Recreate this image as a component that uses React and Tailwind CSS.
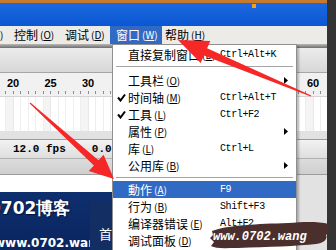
import React from "react";

const menuItems = [
  { label: "直接复制窗口", k: "D", sc: "Ctrl+Alt+K" },
  { sep: true, first: true },
  { label: "工具栏", k: "O", sub: true },
  { label: "时间轴", k: "M", sc: "Ctrl+Alt+T", check: true },
  { label: "工具", k: "L", sc: "Ctrl+F2", check: true },
  { label: "属性", k: "P", sub: true },
  { label: "库", k: "L", sc: "Ctrl+L" },
  { label: "公用库", k: "B", sub: true },
  { sep: true },
  { label: "動作", k: "A", sc: "F9", hl: true },
  { label: "行为", k: "B", sc: "Shift+F3" },
  { label: "编译器错误", k: "E", sc: "Alt+F2" },
  { label: "调试面板", k: "D", sc: "" },
];

function Mn({ k }) {
  return (
    <span className="text-[10px] ml-[2px]">
      (<span className="underline">{k}</span>)
    </span>
  );
}

function Check() {
  return (
    <svg width="9" height="9" viewBox="0 0 9 9" className="shrink-0">
      <path d="M1 4.5 L3.5 7.5 L8 1.5" fill="none" stroke="currentColor" strokeWidth="2" />
    </svg>
  );
}

function SubArrow() {
  return (
    <svg width="4" height="7" viewBox="0 0 4 7">
      <path d="M0 0 L4 3.5 L0 7 Z" fill="#000" />
    </svg>
  );
}

const groups = [20, 25, 30, 35, 40, 45, 50, 55, 60];

export default function App() {
  const cells = Array.from({ length: 46 });
  return (
    <div className="relative w-[336px] h-[250px] overflow-hidden flex bg-[#d6d6d6] font-['Noto_Sans_CJK_SC',sans-serif] text-black">
      <div className="w-[327px] flex flex-col">
        {/* title */}
        <div className="h-[3px] bg-[#c57a30]" />
        <div className="h-[23px] bg-gradient-to-b from-[#1b68e0] to-[#0b57d2] relative">
          <div className="absolute left-[252px] top-[1px] w-[4px] h-[4px] bg-[#f4a020]" />
        </div>
        {/* menu bar */}
        <div className="h-[18px] bg-[#ecebe8] flex items-center text-[12px] leading-none">
          <div className="w-[14px] text-[10px]">)</div>
          <div className="w-[51px] flex items-center">控制<Mn k="O" /></div>
          <div className="w-[45px] flex items-center">调试<Mn k="D" /></div>
          <div className="w-[52px] h-full bg-[#316ac5] text-white flex items-center pl-[6px]">窗口<Mn k="W" /></div>
          <div className="pl-[3px] flex items-center">帮助<Mn k="H" /></div>
        </div>
        <div className="h-[4px] bg-gradient-to-b from-[#b8b8b8] to-[#6e6e6e]" />
        {/* panel */}
        <div className="h-[25px] bg-gradient-to-b from-[#ececec] to-[#d7d7d7] border-b border-[#a6a6a6]" />
        {/* ruler */}
        <div className="h-[23px] bg-[#f1f1f1] flex overflow-hidden">
          <div className="flex ml-[-5.75px]">
            {groups.map((g) => (
              <div key={g} className="w-[37.5px] shrink-0 flex flex-col">
                <div className="h-[17px] flex items-end justify-center pb-[1px] text-[11px] font-bold font-['Liberation_Sans',sans-serif] leading-none">{g}</div>
                <div className="flex h-[6px]">
                  {[0, 1, 2, 3, 4].map((i) => (
                    <div key={i} className="w-[7.5px] shrink-0 flex justify-center">
                      <div className="w-[1px] h-[3px] bg-[#8c8c8c] mt-[1px]" />
                    </div>
                  ))}
                </div>
              </div>
            ))}
          </div>
        </div>
        {/* frames */}
        <div className="h-[35px] bg-white flex overflow-hidden border-t border-[#d4d4d4]">
          <div className="flex ml-[-9px]">
            {cells.map((_, i) => (
              <div
                key={i}
                className={
                  i % 5 === 2
                    ? "w-[7.5px] shrink-0 h-full bg-[#f4f4f4] border-r border-[#e8e8e8]"
                    : "w-[7.5px] shrink-0 h-full border-r border-[#eeeeee]"
                }
              />
            ))}
          </div>
        </div>
        <div className="h-[9px] bg-[#e2e2e2] border-b border-[#9a9a9a]" />
        {/* status */}
        <div className="h-[19px] bg-gradient-to-b from-[#f2f2f2] to-[#dedede] flex items-center text-[11px] font-bold font-['Liberation_Mono',monospace] leading-none border-b border-[#b0b0b0]">
          <span className="ml-[13px]">12.0 fps</span>
          <span className="ml-[26px]">0.0s</span>
        </div>
        <div className="h-[16px] bg-gradient-to-b from-[#dcdcdc] to-[#cfcfcf] border-b border-[#9c9c9c]" />
        {/* bottom web area */}
        <div className="flex-1 flex">
          <div className="w-[297px] flex flex-col">
            <div className="h-[17px] bg-white" />
            <div className="flex-1 bg-gradient-to-b from-[#0e2f6e] to-[#0a2560] overflow-hidden flex">
              <div className="w-[90px] shrink-0 flex flex-col overflow-hidden">
                <div className="mt-[8px] ml-[-11px] text-[17px] font-bold text-white leading-none font-['DejaVu_Sans',sans-serif] [text-shadow:0_0_2px_#001040,1px_1px_0_#06183c] whitespace-nowrap">0702博客</div>
                <div className="mt-[20px] ml-[-6px] text-[12px] font-bold text-white leading-none font-['DejaVu_Sans',sans-serif] whitespace-nowrap">www.0702.wang</div>
              </div>
              <div className="mt-[10px] w-[30px] bg-[#132e62] text-white text-[13px] pt-[25px] pl-[9px] leading-none">首</div>
            </div>
          </div>
          <div className="flex-1 bg-[#e2e2e2]" />
        </div>
      </div>
      <div className="w-[9px] bg-[#343434]" />

      {/* dropdown menu */}
      <div className="absolute left-[112px] top-[44px] w-[185px] bg-white border border-[#8f8f8f] shadow-[2px_2px_2px_rgba(0,0,0,0.25)] pt-[1px] pb-[2px] text-[12px] leading-none">
        {menuItems.map((it, i) =>
          it.sep ? (
            <div key={i} className={it.first ? "h-[9px] pt-[3px] px-[3px]" : "h-[7px] pt-[3px] px-[3px]"}>
              <div className="h-[1px] bg-[#a5a5a5]" />
            </div>
          ) : (
            <div
              key={i}
              className={
                it.hl
                  ? "h-[17px] flex items-center bg-[#316ac5] text-white"
                  : "h-[17px] flex items-center"
              }
            >
              <div className="w-[15px] pl-[4px] flex items-center">{it.check ? <Check /> : null}</div>
              <div className="w-[92px] flex items-center whitespace-nowrap">
                {it.label}
                <Mn k={it.k} />
              </div>
              <div className="flex-1 font-['Liberation_Mono',monospace] text-[10px] tracking-[-0.4px]">{it.sc}</div>
              <div className="w-[12px] flex items-center">{it.sub ? <SubArrow /> : null}</div>
            </div>
          )
        )}
      </div>

      {/* watermark */}
      <div className="absolute left-[208px] top-[219px] w-[124px] h-[31px]">
        <svg width="124" height="31" viewBox="0 0 124 31" className="absolute inset-0">
          <path
            d="M4 12 C20 6 50 5 80 4 C95 3 108 2 121 5 L119 9 L123 12 L118 16 C120 20 116 24 108 25 C90 27 60 28 30 29 C18 29 8 30 3 27 L6 23 L2 19 L5 16 Z"
            fill="#4a2f2c"
          />
        </svg>
        <div className="absolute left-[5px] top-[12px] text-white italic font-bold text-[12px] leading-none font-['Liberation_Mono',monospace]">www.0702.wang</div>
      </div>

      {/* red arrows */}
      <svg width="336" height="250" viewBox="0 0 336 250" className="absolute inset-0 pointer-events-none">
        <polygon
          points="178,40 210.3,40.9 207.1,48.2 311.2,95.5 310.8,96.5 203.9,55.6 200.7,62.9"
          fill="#f52727"
        />
        <polygon
          points="114,179 88.8,171.1 93.9,165.5 29.7,103.4 30.3,102.6 98.5,160.3 103.6,154.7"
          fill="#f52727"
        />
      </svg>
    </div>
  );
}
